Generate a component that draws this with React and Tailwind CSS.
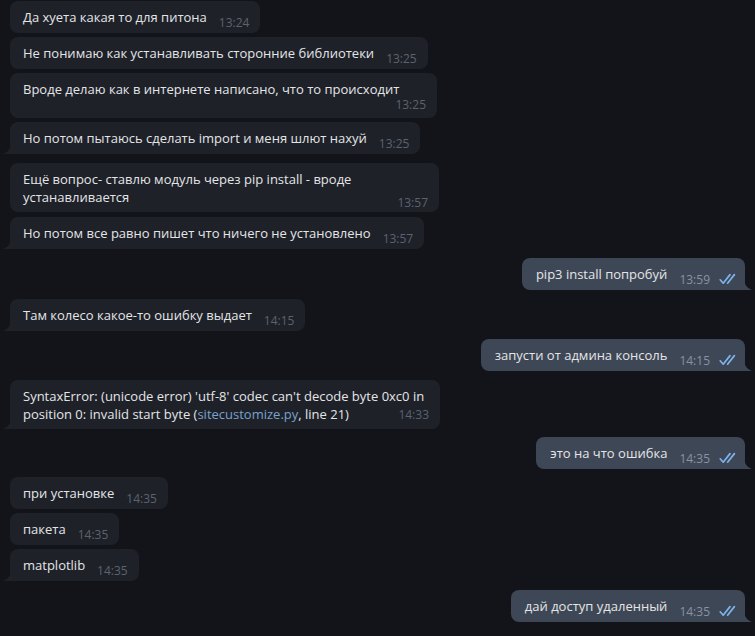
import React from "react";

const messages = [
  { out: false, lines: ["Да хуета какая то для питона"], time: "13:24" },
  { out: false, lines: ["Не понимаю как устанавливать сторонние библиотеки"], time: "13:25", mt: "mt-[4px]" },
  { out: false, lines: ["Вроде делаю как в интернете написано, что то происходит"], time: "13:25", mt: "mt-[4px]", timeBelow: true, w: "w-[427px]" },
  { out: false, lines: ["Но потом пытаюсь сделать import и меня шлют нахуй"], time: "13:25", mt: "mt-[4px]", tail: true },
  { out: false, lines: ["Ещё вопрос- ставлю модуль через pip install - вроде", "устанавливается"], time: "13:57", mt: "mt-[9px]", w: "w-[429px]" },
  { out: false, lines: ["Но потом все равно пишет что ничего не установлено"], time: "13:57", mt: "mt-[5px]", tail: true },
  { out: true, lines: ["pip3 install попробуй"], time: "13:59", mt: "mt-[9px]", tail: true },
  { out: false, lines: ["Там колесо какое-то ошибку выдает"], time: "14:15", mt: "mt-[9px]", tail: true },
  { out: true, lines: ["запусти от админа консоль"], time: "14:15", mt: "mt-[8px]", tail: true },
  { out: false, syntax: true, time: "14:33", mt: "mt-[9px]", tail: true, w: "w-[430px]" },
  { out: true, lines: ["это на что ошибка"], time: "14:35", mt: "mt-[8px]", tail: true },
  { out: false, lines: ["при установке"], time: "14:35", mt: "mt-[8px]" },
  { out: false, lines: ["пакета"], time: "14:35", mt: "mt-[4px]" },
  { out: false, lines: ["matplotlib"], time: "14:35", mt: "mt-[4px]", tail: true },
  { out: true, lines: ["дай доступ удаленный"], time: "14:35", mt: "mt-[9px]", tail: true },
];

function Checks() {
  return (
    <svg width="18" height="12" viewBox="0 0 18 12" fill="none" stroke="#7fb2e8" strokeWidth="1.7" strokeLinecap="round" strokeLinejoin="round">
      <path d="M1.2 6.8 L4.2 10.2 L11 1.6" />
      <path d="M8.6 10.2 L15.4 1.6" />
    </svg>
  );
}

function Tail({ out }) {
  if (out) {
    return (
      <svg className="absolute bottom-0 right-[-7px]" width="8" height="11" viewBox="0 0 8 11">
        <path d="M0 0 C0.5 6 3 9 8 11 H0 Z" fill="#3e4755" />
      </svg>
    );
  }
  return (
    <svg className="absolute bottom-0 left-[-7px]" width="8" height="11" viewBox="0 0 8 11">
      <path d="M8 0 C7.5 6 5 9 0 11 H8 Z" fill="#1e2128" />
    </svg>
  );
}

function Time({ out, children }) {
  return (
    <span className={`ml-[12px] shrink-0 translate-y-[4px] text-[12px] leading-[14px] ${out ? "text-[#8793a4]" : "text-[#5c6370]"}`}>
      {children}
    </span>
  );
}

function SyntaxText() {
  return (
    <>
      <div className="whitespace-nowrap">SyntaxError: (unicode error) 'utf-8' codec can't decode byte 0xc0 in</div>
      <div className="flex items-end">
        <span className="whitespace-nowrap">
          position 0: invalid start byte (<span className="text-[#7aa2cc]">sitecustomize.py</span>, line 21)
        </span>
        <span className="ml-auto">
          <Time>14:33</Time>
        </span>
      </div>
    </>
  );
}

function Bubble({ m }) {
  const last = m.lines ? m.lines.length - 1 : 0;
  return (
    <div className={`flex ${m.out ? "justify-end pr-[10px]" : "pl-[10px]"} ${m.mt || ""}`}>
      <div
        className={`relative rounded-[8px] pl-[13px] pt-[7px] ${m.timeBelow || m.lines?.length > 1 || m.syntax ? "pb-[6px]" : "pb-[7px]"} ${
          m.out ? "bg-[#3e4755] pr-[8px] pl-[14px]" : "bg-[#1e2128] pr-[11px]"
        } ${m.tail ? (m.out ? "rounded-br-none" : "rounded-bl-none") : ""} ${m.w || ""}`}
      >
        {m.syntax ? (
          <SyntaxText />
        ) : m.timeBelow ? (
          <>
            <div className="whitespace-nowrap">{m.lines[0]}</div>
            <div className="flex justify-end leading-[14px]">
              <span className="text-[12px] leading-[14px] text-[#5c6370]">{m.time}</span>
            </div>
          </>
        ) : (
          m.lines.map((line, i) =>
            i < last ? (
              <div key={i} className="whitespace-nowrap">{line}</div>
            ) : (
              <div key={i} className="flex items-end">
                <span className="whitespace-nowrap">{line}</span>
                <span className={`flex items-end ${m.lines.length > 1 ? "ml-auto" : ""}`}>
                  <Time out={m.out}>{m.time}</Time>
                  {m.out && (
                    <span className="ml-[9px] translate-y-[2px]">
                      <Checks />
                    </span>
                  )}
                </span>
              </div>
            )
          )
        )}
        {m.tail && <Tail out={m.out} />}
      </div>
    </div>
  );
}

export default function App() {
  return (
    <div
      className="h-[636px] w-[755px] overflow-hidden bg-[#121419] pt-[1px] text-[13px] leading-[18px] text-[#e4e5e7]"
      style={{ fontFamily: '"Open Sans", "Noto Sans", sans-serif' }}
    >
      {messages.map((m, i) => (
        <Bubble key={i} m={m} />
      ))}
    </div>
  );
}
